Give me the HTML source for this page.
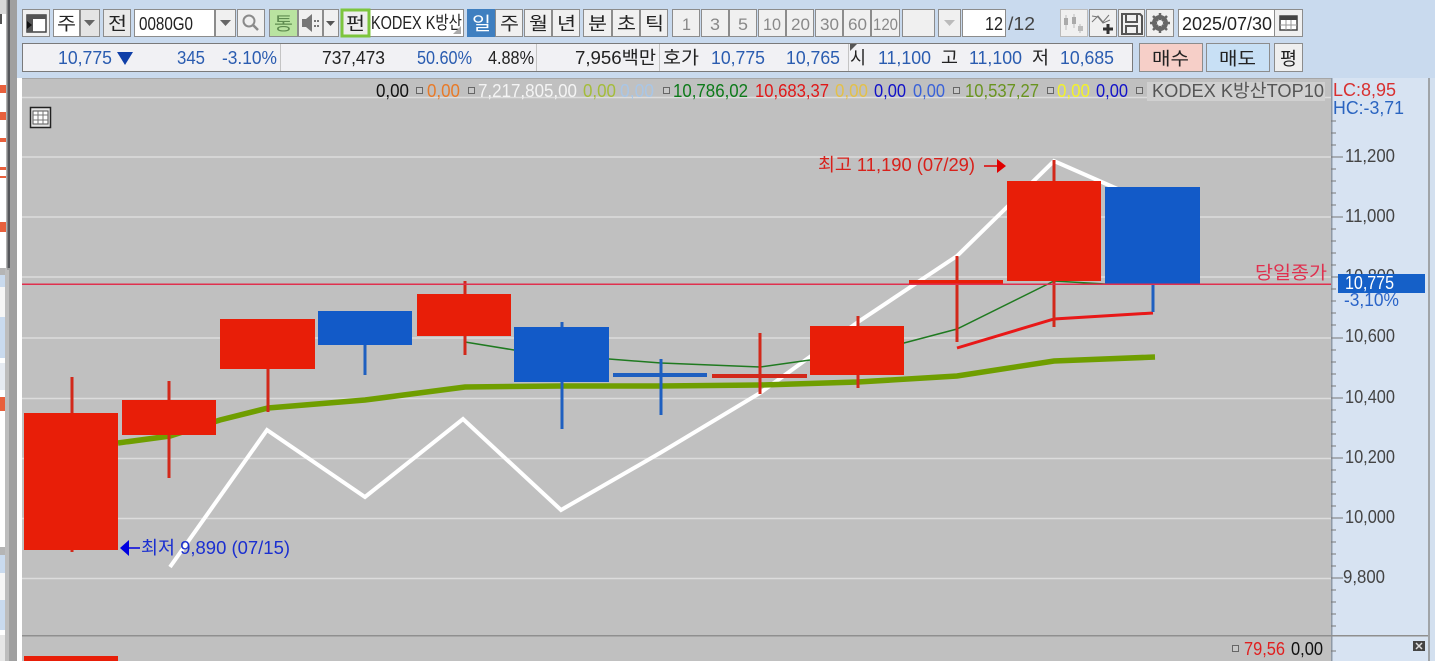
<!DOCTYPE html>
<html lang="ko"><head><meta charset="utf-8"><title>KODEX K방산TOP10</title>
<style>
html,body{margin:0;padding:0;width:1435px;height:661px;overflow:hidden;background:#c9daee}
svg{display:block;position:absolute;left:0;top:0}
text{font-family:"Liberation Sans","Noto Sans CJK KR",sans-serif;font-size:18px}
.b{fill:#f0f0f0;stroke:#8c8c8c;stroke-width:1}
.w{fill:#fff;stroke:#8c8c8c;stroke-width:1}
.sq{fill:#c8c8c8;stroke:#666;stroke-width:1}
.t{font-size:18px;fill:#222}
.d{fill:#888;font-size:17px}
.bl{fill:#2a5cb0}
.ax{fill:#444;font-size:18px}
</style></head><body>
<svg width="1435" height="661" viewBox="0 0 1435 661">
<!-- left strip -->
<rect x="0" y="0" width="7" height="661" fill="#fff"/>
<rect x="0" y="0" width="7" height="14" fill="#d8d8d8"/>
<rect x="0" y="14" width="2" height="10" fill="#555"/>
<g fill="#e8603c"><rect x="0" y="85" width="6" height="8"/><rect x="0" y="112" width="6" height="8"/><rect x="0" y="138" width="6" height="4"/><rect x="0" y="167" width="6" height="3"/><rect x="0" y="176" width="6" height="2"/><rect x="0" y="222" width="6" height="10"/></g>
<rect x="0" y="268" width="8" height="7" fill="#b5b5b5"/>
<rect x="0" y="275" width="5" height="12" fill="#c9daee"/>
<rect x="0" y="287" width="5" height="30" fill="#f6f6f6"/>
<rect x="0" y="317" width="5" height="41" fill="#c9daee"/>
<rect x="0" y="358" width="5" height="5" fill="#fff"/>
<rect x="0" y="363" width="5" height="27" fill="#e6ebf2"/>
<rect x="0" y="390" width="5" height="157" fill="#fff"/>
<rect x="0" y="397" width="5" height="14" fill="#e8603c"/>
<rect x="0" y="547" width="8" height="8" fill="#b5b5b5"/>
<rect x="0" y="555" width="5" height="18" fill="#c9daee"/>
<rect x="0" y="573" width="5" height="27" fill="#f6f6f6"/>
<rect x="0" y="600" width="5" height="30" fill="#c9daee"/>
<rect x="0" y="630" width="5" height="5" fill="#fff"/>
<rect x="0" y="635" width="5" height="26" fill="#e6e6e6"/>
<rect x="5" y="268" width="4" height="393" fill="#bdbdbd"/>
<rect x="7" y="0" width="10" height="661" fill="#a0a0a0" style="clip-path:none"/>
<rect x="5" y="270" width="4" height="391" fill="#bdbdbd"/>
<rect x="6" y="0" width="1.500" height="268" fill="#b0b0b0"/>
<rect x="7.500" y="0" width="2.500" height="268" fill="#55565a"/>
<rect x="17" y="0" width="5" height="78" fill="#c9daee"/>
<rect x="17" y="78" width="5" height="583" fill="#fff"/>

<!-- toolbar row 1 -->
<rect class="b" x="22.5" y="9.5" width="27" height="27"/>
<path d="M27 15h19v17H27z" fill="#fff" stroke="#444" stroke-width="1.5"/><path d="M27 15h19v4H27zM27 19h6v13h-6z" fill="#555"/><path d="M27 21l5 4-5 4z" fill="#111"/>
<rect class="w" x="53.5" y="9.5" width="26" height="27"/><text class="t" x="57" y="30" textLength="19" lengthAdjust="spacingAndGlyphs">주</text>
<rect class="b" x="80.5" y="9.5" width="19" height="27" style="fill:#e4e4e4"/><path d="M84 20h11l-5.500 6z" fill="#666"/>
<rect class="b" x="103.500" y="9.5" width="27" height="27" style="fill:#e9e9e9"/><text class="t" x="108" y="30" textLength="19" lengthAdjust="spacingAndGlyphs">전</text>
<rect class="w" x="134.500" y="9.5" width="80" height="27"/><text class="t" x="139" y="30" textLength="54" lengthAdjust="spacingAndGlyphs">0080G0</text>
<rect class="b" x="215.500" y="9.5" width="20" height="27"/><path d="M220 20h11l-5.500 6z" fill="#666"/>
<rect class="b" x="237.500" y="9.5" width="27" height="27"/><circle cx="249" cy="21" r="5.500" fill="none" stroke="#8a8a8a" stroke-width="2"/><path d="M253 25l5 5" stroke="#8a8a8a" stroke-width="2.500"/>
<rect class="b" x="269.500" y="9.5" width="28" height="27" style="fill:#b9e3a0"/><text x="274" y="30" fill="#5f8c50" textLength="19" lengthAdjust="spacingAndGlyphs">통</text>
<rect class="b" x="298.500" y="9.5" width="24" height="27"/><path d="M302 19h4l6-5v18l-6-5h-4z" fill="#777"/><path d="M314 20h2v2h-2zM317 20h2v2h-2zM314 25h2v2h-2zM317 25h2v2h-2z" fill="#777"/>
<rect class="b" x="323.500" y="9.5" width="15" height="27"/><path d="M326 21h9l-4.500 5z" fill="#555"/>
<rect x="369.500" y="9.5" width="94" height="27" class="w"/>
<rect x="342" y="10" width="27" height="26" fill="#ededed" stroke="#7dc53d" stroke-width="3"/><text class="t" x="346" y="30" textLength="19" lengthAdjust="spacingAndGlyphs">펀</text>
<text class="t" x="371" y="29" textLength="91" lengthAdjust="spacingAndGlyphs">KODEX K방산</text>
<path d="M461 26v8h-8z" fill="#aaa"/>
<rect x="467" y="9" width="28" height="28" fill="#3f7fc0"/><text x="472" y="30" fill="#fff" textLength="19" lengthAdjust="spacingAndGlyphs">일</text>
<rect class="b" x="495.500" y="9.5" width="27" height="27"/><text class="t" x="500" y="30" textLength="19" lengthAdjust="spacingAndGlyphs">주</text>
<rect class="b" x="524.500" y="9.5" width="27" height="27"/><text class="t" x="529" y="30" textLength="19" lengthAdjust="spacingAndGlyphs">월</text>
<rect class="b" x="552.500" y="9.5" width="27" height="27"/><text class="t" x="557" y="30" textLength="19" lengthAdjust="spacingAndGlyphs">년</text>
<rect class="b" x="583.500" y="9.5" width="28" height="27"/><text class="t" x="588" y="30" textLength="19" lengthAdjust="spacingAndGlyphs">분</text>
<rect class="b" x="612.500" y="9.5" width="27" height="27"/><text class="t" x="617" y="30" textLength="19" lengthAdjust="spacingAndGlyphs">초</text>
<rect class="b" x="640.500" y="9.5" width="27" height="27"/><text class="t" x="645" y="30" textLength="19" lengthAdjust="spacingAndGlyphs">틱</text>
<rect class="b" x="672.500" y="9.5" width="27" height="27"/><text class="d" x="682" y="30" textLength="9" lengthAdjust="spacingAndGlyphs">1</text>
<rect class="b" x="701.500" y="9.5" width="27" height="27"/><text class="d" x="710" y="30" textLength="10" lengthAdjust="spacingAndGlyphs">3</text>
<rect class="b" x="729.500" y="9.5" width="27" height="27"/><text class="d" x="738" y="30" textLength="10" lengthAdjust="spacingAndGlyphs">5</text>
<rect class="b" x="758.500" y="9.5" width="27" height="27"/><text class="d" x="763" y="30" textLength="18" lengthAdjust="spacingAndGlyphs">10</text>
<rect class="b" x="786.500" y="9.5" width="27" height="27"/><text class="d" x="791" y="30" textLength="19" lengthAdjust="spacingAndGlyphs">20</text>
<rect class="b" x="815.500" y="9.5" width="27" height="27"/><text class="d" x="820" y="30" textLength="19" lengthAdjust="spacingAndGlyphs">30</text>
<rect class="b" x="843.500" y="9.5" width="27" height="27"/><text class="d" x="848" y="30" textLength="19" lengthAdjust="spacingAndGlyphs">60</text>
<rect class="b" x="871.500" y="9.5" width="28" height="27"/><text class="d" x="873" y="30" textLength="25" lengthAdjust="spacingAndGlyphs">120</text>
<rect class="b" x="902.500" y="9.5" width="32" height="27"/>
<rect class="b" x="938.500" y="9.5" width="22" height="27"/><path d="M944 20h11l-5.500 6z" fill="#bbb"/>
<rect class="w" x="962.500" y="9.5" width="43" height="27"/><text class="t" x="985" y="30" textLength="18" lengthAdjust="spacingAndGlyphs">12</text>
<text x="1008" y="30" fill="#444" textLength="27" lengthAdjust="spacingAndGlyphs">/12</text>
<rect class="b" x="1060.500" y="9.5" width="27" height="27" style="stroke:#bbb"/><path d="M1066 15v15M1074 14v14M1080 24v9" stroke="#bbb"/><path d="M1064 18h4v7h-4zM1072 17h4v7h-4z" fill="#aaa"/><path d="M1078 26h5v5h-5z" fill="#bbb"/>
<rect class="b" x="1089.500" y="9.5" width="27" height="27"/><path d="M1092 22l6-6 5 6 6-7M1092 16l6 1 5 6 7-3" fill="none" stroke="#777"/><path d="M1108 24v10M1103 29h10" stroke="#333" stroke-width="3"/>
<rect class="b" x="1118.500" y="9.5" width="26" height="27"/><path d="M1122 14h18l2 2v18h-20zM1126 14h11v8h-11zM1126 26h11v8h-11z" fill="none" stroke="#555" stroke-width="2"/>
<rect class="b" x="1146.500" y="9.5" width="27" height="27"/><circle cx="1160" cy="23" r="6" fill="none" stroke="#666" stroke-width="4"/><path d="M1160 13v20M1150 23h20M1153 16l14 14M1167 16l-14 14" stroke="#666" stroke-width="2.500"/><circle cx="1160" cy="23" r="3" fill="#f0f0f0"/>
<rect class="w" x="1178.500" y="9.5" width="96" height="27"/><text class="t" x="1182" y="30" textLength="90" lengthAdjust="spacingAndGlyphs">2025/07/30</text>
<rect class="b" x="1274.500" y="9.5" width="28" height="27"/><rect x="1280" y="16" width="17" height="14" fill="#fff" stroke="#444" stroke-width="1.500"/><rect x="1280" y="16" width="17" height="4" fill="#444"/><path d="M1286 20v10M1291 20v10M1280 25h17" stroke="#999"/>

<!-- toolbar row 2 -->
<rect x="22.5" y="43.5" width="1110" height="28" fill="#f1f1f4" stroke="#7a7a7a"/>
<path d="M280.500 44v27M536.500 44v27M659.500 44v27M848.500 44v27" stroke="#c4c4c4"/>
<g style="font-size:18px">
<text class="bl" x="58" y="64" textLength="54" lengthAdjust="spacingAndGlyphs">10,775</text>
<path d="M117 52h16l-8 13z" fill="#0f3fa8"/>
<text class="bl" x="177" y="64" textLength="28" lengthAdjust="spacingAndGlyphs">345</text>
<text class="bl" x="222" y="64" textLength="55" lengthAdjust="spacingAndGlyphs">-3.10%</text>
<text class="t" x="322" y="64" textLength="63" lengthAdjust="spacingAndGlyphs">737,473</text>
<text class="bl" x="417" y="64" textLength="55" lengthAdjust="spacingAndGlyphs">50.60%</text>
<text class="t" x="488" y="64" textLength="46" lengthAdjust="spacingAndGlyphs">4.88%</text>
<text class="t" x="575" y="64" textLength="81" lengthAdjust="spacingAndGlyphs">7,956백만</text>
<text class="t" x="663" y="64" textLength="36" lengthAdjust="spacingAndGlyphs">호가</text>
<text class="bl" x="711" y="64" textLength="54" lengthAdjust="spacingAndGlyphs">10,775</text>
<text class="bl" x="786" y="64" textLength="54" lengthAdjust="spacingAndGlyphs">10,765</text>
<path d="M850 44h7l-7 7z" fill="#555"/>
<text class="t" x="850" y="64" textLength="16" lengthAdjust="spacingAndGlyphs">시</text>
<text class="bl" x="878" y="64" textLength="53" lengthAdjust="spacingAndGlyphs">11,100</text>
<text class="t" x="941" y="64" textLength="17" lengthAdjust="spacingAndGlyphs">고</text>
<text class="bl" x="969" y="64" textLength="53" lengthAdjust="spacingAndGlyphs">11,100</text>
<text class="t" x="1032" y="64" textLength="17" lengthAdjust="spacingAndGlyphs">저</text>
<text class="bl" x="1060" y="64" textLength="54" lengthAdjust="spacingAndGlyphs">10,685</text>
</g>
<rect x="1139.500" y="43.500" width="63" height="28" fill="#f6cfc8" stroke="#8c8c8c"/><text class="t" x="1152" y="65" textLength="37" lengthAdjust="spacingAndGlyphs">매수</text>
<rect x="1206.500" y="43.500" width="63" height="28" fill="#c8e0f5" stroke="#8c8c8c"/><text class="t" x="1219" y="65" textLength="37" lengthAdjust="spacingAndGlyphs">매도</text>
<rect x="1274.500" y="43.500" width="28" height="28" fill="#efefef" stroke="#8c8c8c"/><text class="t" x="1280" y="65" textLength="17" lengthAdjust="spacingAndGlyphs">평</text>

<!-- chart -->
<rect x="22" y="78" width="1309" height="583" fill="#c0c0c0"/>
<rect x="22" y="78" width="1309" height="1" fill="#a6a6a6"/>
<g stroke="#dcdcdc" stroke-width="1.500">
<path d="M22 97.500H1331M22 157H1331M22 217H1331M22 277H1331M22 338H1331M22 398.500H1331M22 458.500H1331M22 518.500H1331M22 578.500H1331"/>
</g>
<rect x="22" y="635" width="1309" height="1.500" fill="#8f8f8f"/>
<rect x="1331" y="78" width="97" height="583" fill="#d7e3f2"/>
<rect x="1331" y="78" width="1.500" height="583" fill="#8f9aa6"/>
<rect x="1428" y="78" width="2" height="583" fill="#a0a4a8"/>
<rect x="1430" y="78" width="5" height="583" fill="#d3e0ef"/>
<rect x="1331" y="635" width="97" height="1.500" fill="#8f8f8f"/>

<rect x="30.500" y="107.500" width="20" height="20" fill="#e4e4e4" stroke="#222" stroke-width="1.500"/>
<path d="M33 111h15v13H33z" fill="#fff" stroke="#555"/><path d="M38 111v13M43 111v13M33 115h15M33 120h15" stroke="#777"/>

<!-- white line -->
<polyline points="170,567 267,430 365,497 463,419 561,510 660,453 760,393 858,322 957,256 1054,161 1154,205" fill="none" stroke="#fff" stroke-width="4"/>
<!-- olive MA -->
<polyline points="118,443 170,436 220,420 268,408 365,400 465,387 562,386 660,386 760,385 858,382 957,376 1054,361 1155,357" fill="none" stroke="#6f9e00" stroke-width="5.500"/>
<!-- thin green -->
<polyline points="465,342 514,350 609,359 661,363 760,367 810,360 904,343 957,329 1054,281 1105,284" fill="none" stroke="#1f7a20" stroke-width="1.500"/>
<!-- thick red -->
<polyline points="957,348 1054,319 1153,313" fill="none" stroke="#e81818" stroke-width="3"/>

<!-- candles: wicks -->
<g stroke="#d2281a" stroke-width="3">
<path d="M72 377V552M169 381V478M268 369V412M465 281V355M760 333V394M858 316V388M957 256V342M1054 160V327"/>
</g>
<g stroke="#1e5fc0" stroke-width="3">
<path d="M365 345V375M562 322V429M661 359V415M1153 284V312"/>
</g>
<g fill="#e81e08">
<rect x="24" y="413" width="94" height="137"/>
<rect x="122" y="400" width="94" height="35"/>
<rect x="220" y="319" width="95" height="50"/>
<rect x="417" y="294" width="94" height="42"/>
<rect x="712" y="374" width="95" height="4" fill="#d2281a"/>
<rect x="810" y="326" width="94" height="49"/>
<rect x="909" y="280" width="94" height="5"/>
<rect x="1007" y="181" width="94" height="100"/>
<rect x="24" y="656" width="94" height="5"/>
</g>
<g fill="#125ac8">
<rect x="318" y="311" width="94" height="34"/>
<rect x="514" y="327" width="95" height="55"/>
<rect x="613" y="373" width="94" height="4" fill="#1e5fc0"/>
<rect x="1105" y="187" width="95" height="97"/>
</g>
<rect x="22" y="283.500" width="1309" height="1.500" fill="#e0304e"/>
<text x="1255" y="279" fill="#e0304e" textLength="72" lengthAdjust="spacingAndGlyphs">당일종가</text>

<!-- annotations -->
<text x="818" y="171" fill="#d8201a" textLength="157" lengthAdjust="spacingAndGlyphs">최고 11,190 (07/29)</text>
<path d="M984 166h14" stroke="#e00000" stroke-width="1.500"/><path d="M997 159l9 7-9 7z" fill="#e00000"/>
<text x="141" y="554" fill="#1a2fd0" textLength="149" lengthAdjust="spacingAndGlyphs">최저 9,890 (07/15)</text>
<path d="M126 548h14" stroke="#0000e0" stroke-width="1.500"/><path d="M129 540l-9 8 9 8z" fill="#0000e0"/>

<!-- header values -->
<rect x="1147" y="82" width="178" height="19" fill="#d0d0d0"/>
<g style="font-size:18px">
<text x="376" y="97" fill="#111" textLength="33" lengthAdjust="spacingAndGlyphs">0,00</text>
<rect class="sq" x="416.500" y="87.500" width="6" height="6"/>
<text x="427" y="97" fill="#e87a28" textLength="33" lengthAdjust="spacingAndGlyphs">0,00</text>
<rect class="sq" x="468.500" y="87.500" width="6" height="6"/>
<text x="478" y="97" fill="#f4f4f4" textLength="99" lengthAdjust="spacingAndGlyphs">7,217,805,00</text>
<text x="583" y="97" fill="#a4bc3a" textLength="33" lengthAdjust="spacingAndGlyphs">0,00</text>
<text x="620" y="97" fill="#a9c6e6" textLength="34" lengthAdjust="spacingAndGlyphs">0,00</text>
<rect class="sq" x="663.500" y="87.500" width="6" height="6"/>
<text x="673" y="97" fill="#0d7a1a" textLength="75" lengthAdjust="spacingAndGlyphs">10,786,02</text>
<text x="755" y="97" fill="#e01818" textLength="74" lengthAdjust="spacingAndGlyphs">10,683,37</text>
<text x="835" y="97" fill="#e3c04a" textLength="33" lengthAdjust="spacingAndGlyphs">0,00</text>
<text x="874" y="97" fill="#1212c8" textLength="32" lengthAdjust="spacingAndGlyphs">0,00</text>
<text x="913" y="97" fill="#3a62d8" textLength="32" lengthAdjust="spacingAndGlyphs">0,00</text>
<rect class="sq" x="953.500" y="87.500" width="6" height="6"/>
<text x="965" y="97" fill="#6a9420" textLength="74" lengthAdjust="spacingAndGlyphs">10,537,27</text>
<rect class="sq" x="1047.500" y="87.500" width="6" height="6"/>
<text x="1057" y="97" fill="#f2f22a" textLength="33" lengthAdjust="spacingAndGlyphs">0,00</text>
<text x="1096" y="97" fill="#1212c8" textLength="32" lengthAdjust="spacingAndGlyphs">0,00</text>
<rect class="sq" x="1136.500" y="87.500" width="6" height="6"/>
<text x="1152" y="97" fill="#555" textLength="172" lengthAdjust="spacingAndGlyphs">KODEX K방산TOP10</text>
<text x="1333" y="96" fill="#d83030" textLength="63" lengthAdjust="spacingAndGlyphs">LC:8,95</text>
<text x="1333" y="114" fill="#2a64c0" textLength="71" lengthAdjust="spacingAndGlyphs">HC:-3,71</text>
</g>

<!-- axis -->
<g stroke="#777" stroke-width="1">
<path d="M1331 157h12M1331 217h12M1331 277h12M1331 338h12M1331 398h12M1331 458h12M1331 518h12M1331 578h12"/>
<path d="M1331 121h5M1331 133h5M1331 145h5M1331 169h5M1331 181h5M1331 193h5M1331 205h5M1331 229h5M1331 241h5M1331 253h5M1331 265h5M1331 289h5M1331 301h5M1331 313h5M1331 325h5M1331 350h5M1331 362h5M1331 374h5M1331 386h5M1331 410h5M1331 422h5M1331 434h5M1331 446h5M1331 470h5M1331 482h5M1331 494h5M1331 506h5M1331 530h5M1331 542h5M1331 554h5M1331 566h5M1331 590h5M1331 602h5M1331 614h5M1331 626h5M1331 651h5"/>
</g>
<text class="ax" x="1345" y="162" textLength="50" lengthAdjust="spacingAndGlyphs">11,200</text>
<text class="ax" x="1345" y="222" textLength="50" lengthAdjust="spacingAndGlyphs">11,000</text>
<text class="ax" x="1345" y="282" textLength="50" lengthAdjust="spacingAndGlyphs">10,800</text>
<text class="ax" x="1345" y="342" textLength="50" lengthAdjust="spacingAndGlyphs">10,600</text>
<text class="ax" x="1345" y="403" textLength="50" lengthAdjust="spacingAndGlyphs">10,400</text>
<text class="ax" x="1345" y="463" textLength="50" lengthAdjust="spacingAndGlyphs">10,200</text>
<text class="ax" x="1345" y="523" textLength="50" lengthAdjust="spacingAndGlyphs">10,000</text>
<text class="ax" x="1343" y="583" textLength="42" lengthAdjust="spacingAndGlyphs">9,800</text>
<rect x="1338" y="274" width="87" height="19" fill="#1560c8"/>
<text x="1345" y="289" fill="#fff" textLength="49" lengthAdjust="spacingAndGlyphs">10,775</text>
<text x="1344" y="306" fill="#2a64c8" textLength="55" lengthAdjust="spacingAndGlyphs">-3,10%</text>

<!-- bottom panel -->
<rect class="sq" x="1232.500" y="645.500" width="6" height="6"/>
<text x="1244" y="655" fill="#e02020" textLength="41" lengthAdjust="spacingAndGlyphs">79,56</text>
<text x="1291" y="655" fill="#111" textLength="32" lengthAdjust="spacingAndGlyphs">0,00</text>
<rect x="1413" y="641" width="12" height="10" fill="#444"/>
<path d="M1416 643l6 6M1422 643l-6 6" stroke="#ddd" stroke-width="1.500"/>
</svg>
</body></html>
